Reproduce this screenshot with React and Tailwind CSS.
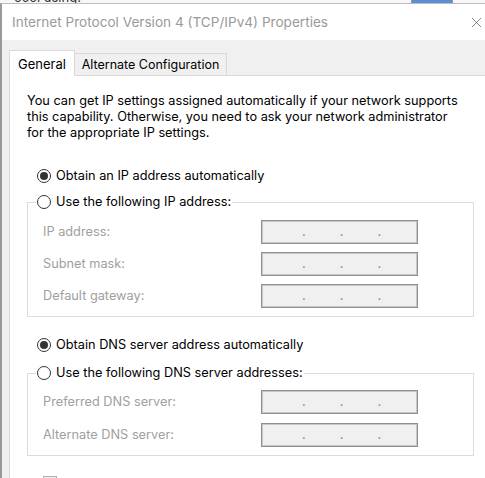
import { X } from 'lucide-react';

function Radio({ checked, label }) {
  return (
    <span className="flex items-center gap-[5px] h-[16px]">
      <span className="w-[14px] h-[14px] rounded-full border border-[#333] bg-white flex items-center justify-center shrink-0">
        {checked && <span className="w-[8px] h-[8px] rounded-full bg-[#333]" />}
      </span>
      <span className="text-black whitespace-nowrap">{label}</span>
    </span>
  );
}

function IpBox() {
  return (
    <div className="w-[157px] h-[24px] border border-[#8f8f8f] shadow-[inset_0_0_0_1px_#c8c8c8] bg-[#f0f0f0] flex items-center pl-[40px] gap-[34px] text-[#8a8aa0] leading-none">
      <span>.</span>
      <span>.</span>
      <span>.</span>
    </div>
  );
}

function Row({ label }) {
  return (
    <div className="flex items-center h-[24px]">
      <span className="w-[218px] text-[#a0a0a0]">{label}</span>
      <IpBox />
    </div>
  );
}

export default function App() {
  return (
    <div className="w-[485px] h-[478px] overflow-hidden bg-[#f0f0f0] font-['Inter',sans-serif] text-[12.75px] leading-[16px]">
      {/* window behind */}
      <div className="h-[3px] overflow-hidden bg-[#f7f7f7] flex">
        <span className="ml-[14px] -mt-[11px] text-[13px] text-[#333]">ocol using:</span>
        <span className="ml-auto mr-[32px] w-[42px] bg-[#5b8fd6] border-x border-[#999]" />
      </div>

      <div className="border-t border-[#bdbdbd] border-l-2 border-l-[#9a9a9a] h-full">
        <div className="h-[36px] bg-white flex items-center pl-[10px]">
          <span className="text-[13.6px] text-[#9a9a9a]">Internet Protocol Version 4 (TCP/IPv4) Properties</span>
          <X className="ml-auto w-[17px] h-[17px] text-[#555]" strokeWidth={1} />
        </div>

        <div className="pt-[10px] pl-[7px]">
          <div className="flex items-end relative z-10 -mb-px">
            <div className="w-[66px] h-[26px] bg-white border border-b-0 border-[#d9d9d9] flex items-center justify-center text-black text-[13px]">
              General
            </div>
            <div className="w-[152px] h-[22px] mb-px bg-[#f0f0f0] border border-l-0 border-b-0 border-[#d9d9d9] flex items-center justify-center text-black text-[12.5px]">
              Alternate Configuration
            </div>
          </div>

          <div className="w-[500px] h-[420px] bg-white border border-[#d9d9d9] pl-[17px] pt-[17px]">
            <p className="whitespace-nowrap text-black">
              You can get IP settings assigned automatically if your network supports
              <br />
              this capability. Otherwise, you need to ask your network administrator
              <br />
              for the appropriate IP settings.
            </p>

            <div className="mt-[27px] ml-[10px]">
              <Radio checked label="Obtain an IP address automatically" />
            </div>

            <fieldset className="mt-[10px] w-[447px] border border-[#dcdcdc] p-0 pb-[8px] m-0">
              <legend className="ml-[8px] px-[1px]">
                <Radio label="Use the following IP address:" />
              </legend>
              <div className="pl-[15px] mt-[10px] flex flex-col gap-[8px]">
                <Row label="IP address:" />
                <Row label="Subnet mask:" />
                <Row label="Default gateway:" />
              </div>
            </fieldset>

            <div className="mt-[20px] ml-[10px]">
              <Radio checked label="Obtain DNS server address automatically" />
            </div>

            <fieldset className="mt-[12px] w-[447px] border border-[#dcdcdc] p-0 pb-[8px] m-0">
              <legend className="ml-[8px] px-[1px]">
                <Radio label="Use the following DNS server addresses:" />
              </legend>
              <div className="pl-[15px] mt-[9px] flex flex-col gap-[9px]">
                <Row label="Preferred DNS server:" />
                <Row label="Alternate DNS server:" />
              </div>
            </fieldset>

            <div className="mt-[20px] ml-[16px] w-[14px] h-[14px] border border-[#b0b0b0] bg-[#f0f0f0]" />
          </div>
        </div>
      </div>
    </div>
  );
}
